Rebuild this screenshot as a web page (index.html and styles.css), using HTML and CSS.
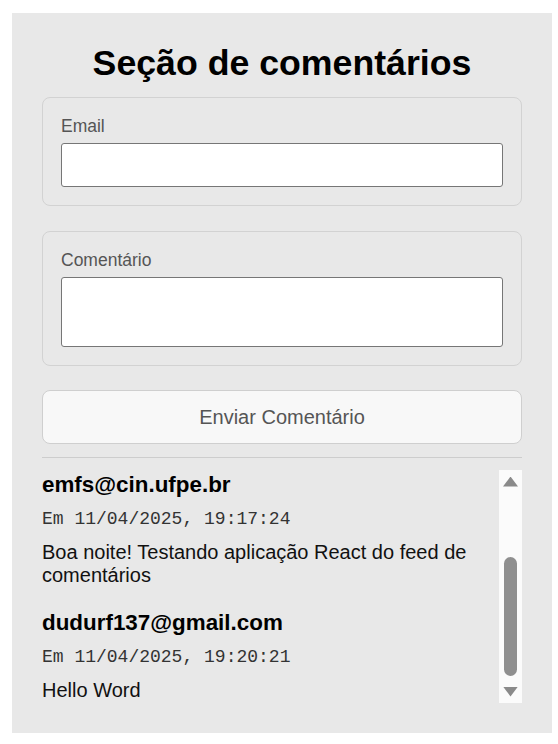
FILE: index.html
```html
<!DOCTYPE html>
<html lang="pt-BR">
<head>
<meta charset="utf-8">
<title>Seção de comentários</title>
<link rel="stylesheet" href="styles.css">
</head>
<body>
<main class="comments">
  <h1 class="title">Seção de comentários</h1>
  <form class="comment-form">
    <div class="field">
      <label class="field-label" for="email">Email</label>
      <input id="email" class="field-input" type="email">
    </div>
    <div class="field">
      <label class="field-label" for="comment">Comentário</label>
      <textarea id="comment" class="field-input field-textarea"></textarea>
    </div>
    <button class="submit" type="button">Enviar Comentário</button>
  </form>
  <hr class="divider">
  <div class="feed">
    <div class="feed-viewport">
      <ul class="feed-list">
        <li class="feed-item">
          <h3 class="feed-author">emfs@cin.ufpe.br</h3>
          <p class="feed-date">Em 11/04/2025, 19:17:24</p>
          <p class="feed-text">Boa noite! Testando aplicação React do feed de comentários</p>
        </li>
        <li class="feed-item">
          <h3 class="feed-author">dudurf137@gmail.com</h3>
          <p class="feed-date">Em 11/04/2025, 19:20:21</p>
          <p class="feed-text">Hello Word</p>
        </li>
      </ul>
    </div>
    <div class="scrollbar" aria-hidden="true">
      <span class="scrollbar-button"><span class="scrollbar-arrow scrollbar-arrow-up"></span></span>
      <span class="scrollbar-track"><span class="scrollbar-thumb"></span></span>
      <span class="scrollbar-button"><span class="scrollbar-arrow scrollbar-arrow-down"></span></span>
    </div>
  </div>
</main>
</body>
</html>
```
FILE: styles.css
```css
html, body {
  margin: 0;
  padding: 0;
  background: #ffffff;
}

body {
  font-family: "Liberation Sans", Arial, sans-serif;
  color: #000;
}

.comments {
  box-sizing: border-box;
  width: 540px;
  height: 720px;
  margin: 13px 0 0 12px;
  padding: 30px;
  background: #e8e8e8;
  display: flex;
  flex-direction: column;
}

.title {
  margin: 0 0 13px;
  font-size: 35.7px;
  font-weight: bold;
  text-align: center;
  line-height: normal;
}

.comment-form {
  display: flex;
  flex-direction: column;
  gap: 25px;
}

.field {
  display: flex;
  flex-direction: column;
  gap: 6px;
  padding: 18px;
  border: 1px solid #d2d2d2;
  border-radius: 8px;
}

.field-label {
  font-size: 17.5px;
  color: #555;
  line-height: normal;
}

.field-input {
  box-sizing: border-box;
  display: block;
  width: 100%;
  height: 44px;
  margin: 0;
  padding: 4px 8px;
  border: 1px solid #767676;
  border-radius: 3px;
  background: #fff;
  font: inherit;
  font-size: 17px;
}

.field-textarea {
  height: 70px;
  resize: none;
}

.submit {
  box-sizing: border-box;
  height: 54px;
  margin-top: -1px;
  border: 1px solid #cfcfcf;
  border-radius: 8px;
  background: #f8f8f8;
  color: #555;
  font-family: inherit;
  font-size: 20px;
}

.divider {
  margin: 13px 0 12px;
  border: 0;
  border-top: 1px solid #cdcdcd;
  height: 0;
}

.feed {
  height: 233px;
  display: flex;
}

.feed-viewport {
  flex: 1;
  min-width: 0;
  overflow: hidden;
  display: flex;
  flex-direction: column-reverse;
}

.scrollbar {
  width: 23px;
  flex: none;
  display: flex;
  flex-direction: column;
  background: #fbfbfb;
}

.scrollbar-button {
  height: 23px;
  flex: none;
  display: flex;
  align-items: center;
  justify-content: center;
}

.scrollbar-arrow {
  width: 15px;
  height: 10px;
  background: #8a8a8a;
}

.scrollbar-arrow-up {
  clip-path: polygon(50% 0, 100% 100%, 0 100%);
}

.scrollbar-arrow-down {
  clip-path: polygon(0 0, 100% 0, 50% 100%);
}

.scrollbar-track {
  flex: 1;
  display: flex;
  flex-direction: column;
  justify-content: flex-end;
  padding: 0 5px 4px;
}

.scrollbar-thumb {
  height: 119px;
  border-radius: 7px;
  background: #8f8f8f;
}

.feed-list {
  list-style: none;
  margin: 0;
  padding: 0 0 1px;
  display: flex;
  flex-direction: column;
  gap: 23px;
}

.feed-author {
  margin: 0 0 11px;
  font-size: 22.4px;
  font-weight: bold;
  line-height: normal;
}

.feed-date {
  margin: 0 0 12px;
  font-family: "Liberation Mono", "Courier New", monospace;
  font-size: 18px;
  color: #333;
  line-height: normal;
}

.feed-text {
  margin: 0;
  font-size: 20px;
  line-height: 23px;
  color: #111;
}
```
